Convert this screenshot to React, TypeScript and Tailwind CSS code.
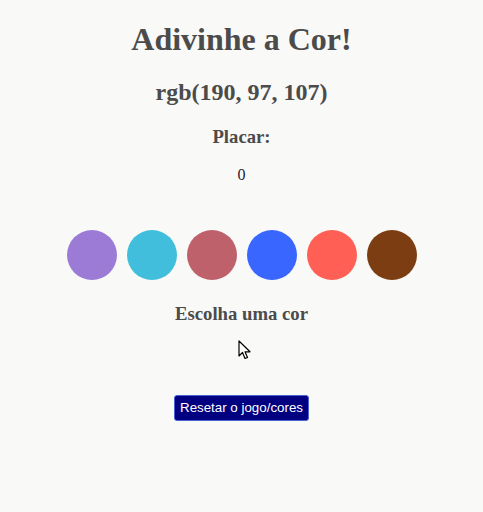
const circles = [
  "#9b7bd6",
  "#40bedc",
  "#be616b",
  "#3866ff",
  "#ff5f55",
  "#7b3d11",
];

export default function App() {
  return (
    <div className="min-h-[512px] w-full bg-[#f9f9f7] font-['Liberation_Serif',serif] text-[#4b4b4b]">
      <div className="flex flex-col items-center">
        <h1 className="mt-[21px] text-[32px] leading-[37px] font-bold">Adivinhe a Cor!</h1>
        <h2 className="mt-[20px] text-[24px] leading-[28px] font-bold">rgb(190, 97, 107)</h2>
        <h3 className="mt-[20px] text-[18.72px] leading-[22px] font-bold">Placar:</h3>
        <p className="mt-[18px] text-[16px] leading-[18px] text-[#1e2235]">0</p>

        {/* Color options */}
        <div className="mt-[46px] flex gap-[10px]">
          {circles.map((c) => (
            <div
              key={c}
              className="h-[50px] w-[50px] cursor-pointer rounded-full"
              style={{ backgroundColor: c }}
            />
          ))}
        </div>

        <h3 className="mt-[23px] text-[18.72px] leading-[22px] font-bold">Escolha uma cor</h3>

        {/* mouse pointer */}
        <svg className="mt-[15px] ml-[6px]" width="13" height="20" viewBox="0 0 13 20">
          <path
            d="M1 1 L1 16 L4.5 12.5 L7 18.5 L9.5 17.5 L7 11.8 L12 11.8 Z"
            fill="#fff"
            stroke="#000"
            strokeWidth="1.2"
            strokeLinejoin="round"
          />
        </svg>

        <button className="mt-[35px] h-[26px] rounded-[3px] border border-[#4a5fd0] bg-[#000080] px-[5px] font-['Liberation_Sans',sans-serif] text-[13.33px] text-white">
          Resetar o jogo/cores
        </button>
      </div>
    </div>
  );
}
